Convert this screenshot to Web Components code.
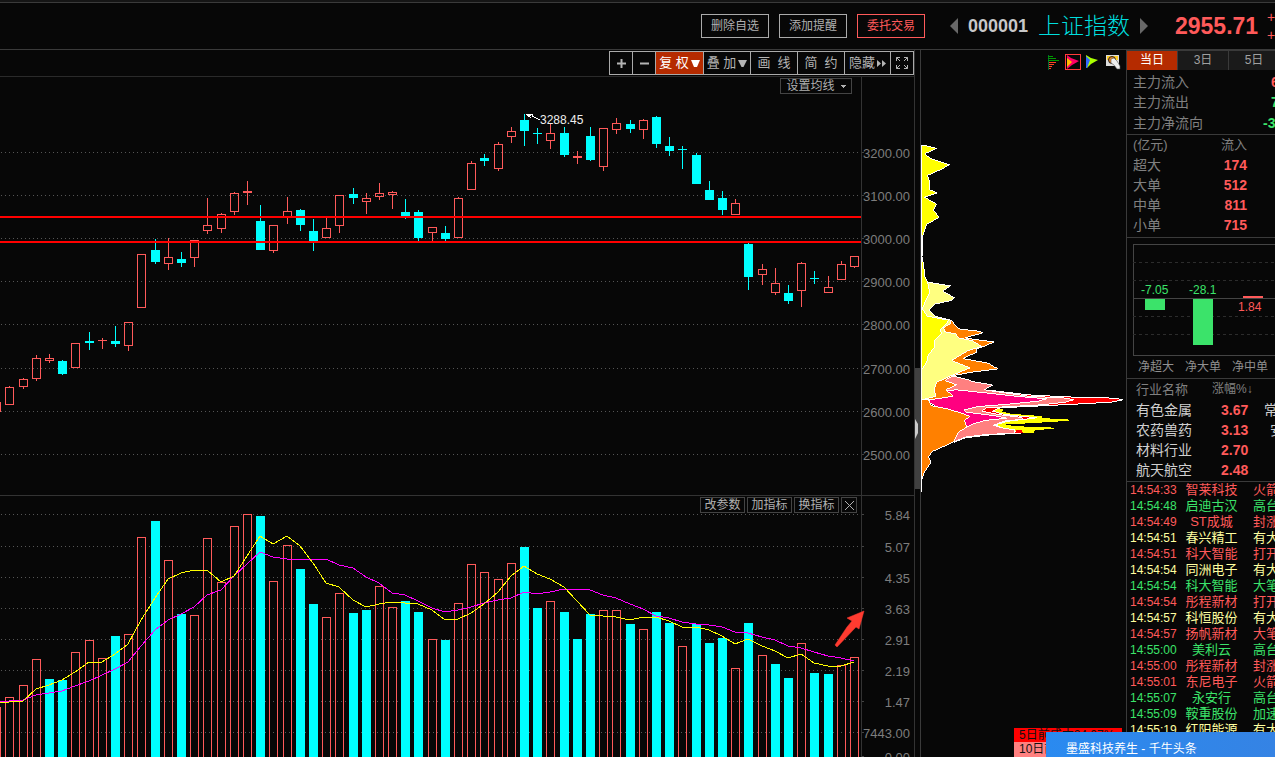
<!DOCTYPE html>
<html lang="zh-CN">
<head>
<meta charset="utf-8">
<title>上证指数 000001</title>
<style>
html, body { margin: 0; height: 100%; background: #070707; overflow: hidden; }
body { font: 12px/16px "Liberation Sans", "Noto Sans CJK SC", sans-serif; color: #b4b4b4; }
</style>
</head>
<body>
<stock-app></stock-app>
<script>
function define(name, html, ready) {
  customElements.define(name, class extends HTMLElement {
    constructor() {
      super();
      this.attachShadow({ mode: 'open' }).innerHTML =
        '<style>*{box-sizing:border-box}button{font:inherit;color:inherit;background:none;margin:0;padding:0;cursor:pointer;white-space:nowrap}svg{display:block}table{border-collapse:collapse;table-layout:fixed}th,td{padding:0;font-weight:inherit;text-align:left;white-space:nowrap}</style>' + html;
      if (ready) ready(this.shadowRoot, this);
    }
  });
}

/* Daily bars: x, body top, body bottom, wick top, wick bottom, falling day, volume top, volume falling */
const BARS = [
[-8,402,412,402,412,0,707,0],[5,387,405,386,405,0,697,0],[19,379,387,378,389,0,685,0],[32,358,379,355,381,0,659,0],
[45,358,361,354,363,0,679,1],[58,361,374,360,375,1,680,1],[71,343,368,343,368,0,652,0],[85,341,343,332,350,1,640,0],
[98,340,341,338,349,0,658,0],[111,341,344,326,347,1,636,1],[124,322,346,322,351,0,634,0],[137,254,308,254,308,0,537,0],
[151,250,262,239,264,1,521,1],[164,257,264,238,270,0,560,0],[177,259,263,252,267,1,614,1],[190,240,258,240,267,0,615,0],
[203,225,231,198,234,0,538,0],[217,214,229,213,233,0,582,0],[230,193,212,192,215,0,526,0],[243,191,193,181,205,0,514,0],
[256,221,250,205,250,1,516,1],[269,225,251,225,253,0,581,0],[283,211,217,197,224,0,545,0],[296,210,225,209,231,1,569,1],
[309,231,241,219,251,1,604,1],[322,228,238,218,238,0,617,0],[335,195,226,195,233,0,593,0],[349,194,198,188,204,1,613,1],
[362,198,202,193,214,0,610,1],[375,193,197,183,200,0,586,0],[388,192,195,191,209,0,607,0],[401,212,216,199,219,1,601,1],
[414,212,238,210,241,1,612,1],[428,227,233,227,241,0,639,0],[441,233,239,226,241,1,640,1],[454,198,238,197,238,0,603,0],
[467,163,190,161,190,0,564,0],[480,158,161,154,166,1,572,0],[494,144,169,142,171,0,579,0],[507,131,137,127,143,0,563,0],
[520,120,131,114,146,1,547,1],[533,133,134,128,144,1,608,1],[546,133,141,124,149,0,601,0],[560,133,155,127,157,1,612,1],
[573,156,158,151,164,0,639,1],[586,136,160,127,161,1,614,1],[599,128,167,128,171,0,610,0],[612,123,130,118,134,0,610,0],
[626,124,129,120,133,1,624,1],[639,120,130,119,139,0,629,0],[652,117,144,116,148,1,612,1],[665,146,151,137,156,1,623,1],
[678,149,150,146,169,1,646,0],[692,155,184,153,184,1,624,1],[705,190,200,181,200,1,643,1],[718,198,210,191,215,1,638,1],
[731,203,215,199,215,0,668,0],[744,244,277,243,290,1,623,1],[758,269,275,264,285,0,655,0],[771,283,293,268,295,0,664,1],
[784,293,301,285,304,1,678,1],[797,263,291,262,307,0,643,0],[810,278,279,271,284,1,673,1],[824,287,293,276,293,0,674,1],
[837,264,280,261,280,0,665,0],[850,256,267,256,268,0,657,0]];
const MA5 = [703,702,701,689,685,680,672,662,662,654,644,620,598,579,573,570,570,582,576,556,536,544,536,546,563,583,587,600,607,604,602,603,604,610,620,619,613,604,592,576,566,574,579,587,601,615,616,617,620,617,617,621,627,627,630,636,644,639,646,651,658,654,663,666,666,662];
const MA10 = [701,701,700,695,693,691,686,681,675,669,662,646,630,620,614,607,595,590,576,564,552,557,559,560,559,559,565,568,577,583,593,595,601,608,612,610,607,603,600,598,592,594,592,589,589,590,595,598,604,609,616,618,622,624,625,627,632,633,637,640,646,648,652,656,658,661];
const UP = '#ff5a5a', DOWN = '#00ffff';

function box(x, top, bottom, falling) {
  const h = bottom - top;
  return falling || h < 3
    ? `<rect x="${x}" y="${top}" width="9" height="${h}" fill="${falling ? DOWN : UP}"/>`
    : `<path d="M${x} ${top}h9v${h}h-9zM${x + 1} ${top + 1}v${h - 2}h7v${-(h - 2)}z" fill="${UP}" fill-rule="evenodd"/>`;
}
function grid(rows) {
  return rows.map(y => `<path d="M1 ${y}.5H861" stroke="#555" stroke-dasharray="1 3"/>`).join('');
}
function axis(rows, top, height) {
  return `<svg class="axis" viewBox="0 ${top} 52 ${height}" preserveAspectRatio="xMinYMin meet">` +
    rows.map(([y, t]) => `<path d="M0 ${y}.5h2" stroke="#444"/><text x="48" y="${y + 6}" text-anchor="end">${t}</text>`).join('') + '</svg>';
}
const CHART_CSS = `<style>
:host{display:grid;grid-template-columns:minmax(0,1fr) 53px;position:relative;min-height:0;overflow:hidden}
svg{width:100%;height:100%;shape-rendering:crispEdges}
.axis{border-left:1px solid #333}
.axis text{font:13px "Liberation Sans",sans-serif;fill:#7d7d7d}
.mark{font:12px "Liberation Sans",sans-serif;fill:#eee}
.tools{position:absolute;display:flex;color:#b0b0b0}
.tools button{border:1px solid #444;background:#070707;height:16px;line-height:14px;font-size:12px}
</style>`;

const PRICE_ROWS = [[152,'3200.00'],[195,'3100.00'],[238,'3000.00'],[281,'2900.00'],[324,'2800.00'],[368,'2700.00'],[411,'2600.00'],[454,'2500.00']];
define('price-chart', CHART_CSS + `<style>.tools{top:1px;right:62px}.tools button{width:72px;display:flex;align-items:center;justify-content:center;gap:6px}</style>
<svg viewBox="0 77 861 418" preserveAspectRatio="xMaxYMin meet" role="img" aria-label="日K线">
${grid(PRICE_ROWS.map(r => r[0]))}
${BARS.map(([x, t, b, wt, wb, f]) => {
  const c = f ? DOWN : UP;
  return (wt < t ? `<rect x="${x + 4}" y="${wt}" width="1" height="${t - wt}" fill="${c}"/>` : '') +
    (wb > b ? `<rect x="${x + 4}" y="${b}" width="1" height="${wb - b}" fill="${c}"/>` : '') + box(x, t, b, f);
}).join('')}
<path d="M0 217H861M0 242H861" stroke="#f00" stroke-width="2"/>
<path d="M526 114l7 0-1 2 8 4M526 114l5 4" fill="none" stroke="#fff"/><path d="M526 114h7l-4 3z" fill="#fff"/>
<text class="mark" x="540" y="124">3288.45</text>
</svg>${axis(PRICE_ROWS, 77, 418)}
<div class="tools"><button>设置均线<svg style="width:5px;height:3px" viewBox="0 0 5 3"><path d="M0 0h5L2.500 3z" fill="#b0b0b0"/></svg></button></div>`);

const VOL_ROWS = [[514,'5.84'],[546,'5.07'],[577,'4.35'],[608,'3.63'],[639,'2.91'],[670,'2.19'],[701,'1.47'],[732,'7443.00']];
const line = (ys, c) => `<polyline fill="none" stroke="${c}" points="${ys.map((y, i) => (BARS[i][0] + 4) + ',' + y).join(' ')}"/>`;
define('volume-chart', CHART_CSS + `<style>.tools{top:1px;right:57px;gap:2px}.tools button{width:45px}.tools button.x{width:16px;display:grid;place-items:center}</style>
<svg style="overflow:visible;position:relative" viewBox="0 496 861 261" preserveAspectRatio="xMaxYMin meet" role="img" aria-label="成交量">
${grid(VOL_ROWS.map(r => r[0]))}
${BARS.map(b => box(b[0], b[6], 762, b[7])).join('')}
${line(MA10, '#ff00ff')}${line(MA5, '#ffff00')}
<path d="M864 611L847 618 852 621 847 627 835 645 837 647 856 627 859 629z" fill="#ff3b30" stroke="#ff3b30" stroke-width=".5" shape-rendering="auto"/>
</svg>${axis([...VOL_ROWS, [756, '0.00']], 496, 261)}
<div class="tools"><button>改参数</button><button>加指标</button><button>换指标</button><button class="x" aria-label="关闭"><svg style="width:11px;height:11px" viewBox="0 0 11 11"><path d="M1 1l9 9M10 1l-9 9" stroke="#b0b0b0"/></svg></button></div>`);

define('chart-toolbar', `<style>
:host{display:flex;justify-content:flex-end;padding-top:1px;height:27px;border-bottom:1px solid #2a2a2a}
div{display:grid;grid-template-columns:23px 23px 48px 47px 47px 47px 46px 23px;height:24px;border:1px solid #aaa;border-left:0}
button{border:0;border-left:1px solid #aaa;display:flex;align-items:center;justify-content:center;font-size:13px;color:#b4b4b4;gap:2px}
.on{background:#b52b00;color:#fff}
svg{width:9px;height:9px;fill:currentColor}
</style><div>
<button aria-label="放大"><svg viewBox="0 0 9 9"><path d="M0 3.500h9v2H0zM3.500 0h2v9h-2z"/></svg></button>
<button aria-label="缩小"><svg viewBox="0 0 9 9"><path d="M0 3.500h9v2H0z"/></svg></button>
<button class="on">复 权<svg viewBox="0 0 9 9"><path d="M0 1h9L6 8H3z"/></svg></button>
<button>叠 加<svg viewBox="0 0 9 9"><path d="M0 1h9L5.500 8h-2z"/></svg></button>
<button>画&nbsp; 线</button><button>简&nbsp; 约</button>
<button>隐藏<svg viewBox="0 0 9 9"><path d="M0 1l4 3.500L0 8zM5 1l4 3.500L5 8z"/></svg></button>
<button aria-label="全屏"><svg style="width:12px;height:12px" viewBox="0 0 12 12" stroke="currentColor"><path d="M.5 4V.5H4M.5.5L4 4M8 .5h3.500V4M11.500.5L8 4M.5 8v3.500H4M.5 11.500L4 8M8 11.500h3.500V8M11.500 11.500L8 8" fill="none"/></svg></button>
</div>`);

define('quote-header', `<style>
:host{display:flex;justify-content:flex-end;align-items:center;height:50px;border-bottom:1px solid #3a3a3a;padding:3px 0 0;background:linear-gradient(#151515 2px,#3a3a3a 2px,#3a3a3a 3px,#070707 3px)}
nav{display:flex;gap:10px;margin-right:25px}
nav button{width:68px;height:24px;border:1px solid #aaa;color:#b0b0b0;line-height:22px}
nav .hot{border-color:#ff5a5a;color:#ff5a5a}
.step{border:0;display:block}.step svg{width:8px;height:16px;fill:#686868}
.code{font:bold 18px/22px "Liberation Sans",sans-serif;color:#c8c8c8;width:61px;margin-left:10px;margin-right:9px}
.name{font-size:23px;line-height:30px;font-weight:300;color:#00dede;width:92px;margin:0 10px 0 0}
.price{font:bold 23px/26px "Liberation Sans",sans-serif;color:#ff5a5a;width:84px;margin-left:27px}
.delta{width:8px;margin-left:8px;overflow:hidden;color:#ff5a5a;font-size:14px;line-height:18px}
</style><nav><button>删除自选</button><button>添加提醒</button><button class="hot">委托交易</button></nav>
<button class="step" aria-label="上一只"><svg viewBox="0 0 8 16"><path d="M8 0v16L0 8z"/></svg></button>
<span class="code">000001</span><h1 class="name">上证指数</h1>
<button class="step" aria-label="下一只"><svg viewBox="0 0 8 16"><path d="M0 0v16l8-8z"/></svg></button>
<span class="price">2955.71</span><div class="delta">+<br>+</div>`);

define('chip-panel', `<style>
:host{display:block;position:relative;border-left:1px solid #3a3a3a;overflow:visible;min-height:0}
.chips{width:205px;height:707px;shape-rendering:crispEdges}
.modes{position:absolute;top:4px;right:5px;display:flex;gap:4px}
.modes button{border:0;width:16px;height:16px}
.modes .on{outline:1px solid #ff3b3b;outline-offset:-1px}
.grip{position:absolute;left:-6px;top:318px;width:5px;height:121px;background:#404040;border:0}
.grip svg{position:absolute;left:0;top:51px;width:4px;height:20px}
ul{position:absolute;right:4px;top:678px;width:108px;margin:0;padding:0;list-style:none;color:#111;line-height:14px}
li{height:14px;padding-left:5px;white-space:nowrap;overflow:hidden}
li+li{height:15px}
</style>
<svg class="chips" viewBox="0 0 205 707" role="img" aria-label="筹码分布"><g transform="translate(-6 80.500) scale(.33333)" stroke="#fff" stroke-width="3">
<path stroke="none" fill="#ff0" d="M150 832L230 838 265 836 262 843 290 850 383 857 380 862 430 866 486 868 430 873 350 878 272 882 300 887 435 892 400 896 360 899 355 908 330 907 150 900z"/>
<path fill="#f00" d="M100 778L230 780 340 793 450 799 600 803 623 808 590 815 480 821 380 826 255 832 232 842 270 852 365 862 280 872 240 883 270 895 325 907 215 914 150 922 118 935 60 880z"/>
<path fill="#ff8080" d="M60 750L90 745 115 737 160 748 170 753 235 764 220 770 208 778 340 797 455 803 476 808 450 815 380 823 215 832 200 842 250 852 320 861 325 867 275 870 235 884 260 892 300 898 300 908 215 912 150 920 120 933 60 880z"/>
<path fill="#ff0080" d="M40 815L45 808 100 780 125 778 220 788 300 797 395 805 370 812 270 822 190 828 147 838 155 845 235 855 275 863 210 870 175 880 155 890 100 870 60 825z"/>
<path fill="#ff8000" d="M20 808L40 808 48 825 100 836 140 848 165 858 148 870 155 890 130 905 115 935 52 963 40 980 48 995 35 1015 25 1030 22 1047H20z"/>
<path fill="#ff8000" d="M20 575L110 569 118 582 130 595 190 602 203 607 150 622 200 630 238 634 210 646 185 655 185 665 143 684 220 698 235 708 250 715 170 725 115 735 90 750 125 763 92 778 115 797 45 808 20 808z"/>
<path fill="#ffff80" d="M20 450L38 455 107 466 83 482 119 502 110 510 62 520 42 538 60 557 108 569 105 580 85 592 90 604 123 610 130 622 170 630 200 648 160 660 110 690 165 712 110 735 65 755 58 775 62 798 20 808z"/>
<path fill="#ff0" d="M20 45L30 45 65 54 33 68 33 75 50 85 104 103 75 118 37 135 43 150 44 178 67 187 28 200 64 220 55 240 73 260 35 282 22 320 21 380 25 400 30 440 38 455 44 485 30 515 22 535 37 557 100 569 95 580 75 598 80 610 60 628 60 650 40 672 35 695 22 715H20z"/>
<path d="M20 45V1085"/><path stroke="none" fill="#f00" d="M303 898l15 0 8 10-20 0z"/>
</g></svg>
<button class="grip" aria-label="展开面板"><svg viewBox="0 0 4 20"><path d="M0 0l3 5v9l-3 6z" fill="#ccc"/></svg></button>
<div class="modes">
<button aria-label="筹码峰"><svg viewBox="0 0 16 16" shape-rendering="crispEdges"><path d="M3 1v15" stroke="#063" fill="none"/><path d="M3 2.500h5M3 4.500h8M3 6.500h11" stroke="#090"/><path d="M4 8.500h7M4 10.500h5M4 12.500h3M4 14.500h2" stroke="#f42"/></svg></button>
<button class="on" aria-label="火焰山"><svg viewBox="0 0 16 16"><path d="M2 1l4 3 8 3-7 4-5 4z" fill="#f06"/><path d="M2 4l5 4-5 5z" fill="#fb0"/></svg></button>
<button aria-label="活跃度"><svg viewBox="0 0 16 16"><path d="M1 1l5 3 7 2-7 4-4 4H1z" fill="#af0"/><path d="M1 2l4 4-3 8H1z" fill="#36f"/></svg></button>
<button aria-label="设置"><svg viewBox="0 0 16 16"><path d="M1 1h13v11H1z" fill="#ddd"/><path d="M2 2h11v4H2z" fill="#fc2"/><circle cx="7" cy="6" r="3.500" fill="#e82" stroke="#222"/><path d="M6 5l3-1 3 3 3 5v3h-3L9 11l-3-2z" fill="#eee" stroke="#555" stroke-width=".6"/></svg></button>
</div>
<ul><li style="background:#f00">5日前成本24.07%</li><li style="background:#ff8080">10日前成本</li></ul>`);

define('flow-panel', `<style>
:host{display:block;color:#808080;font-size:14px}
nav{display:grid;grid-template-columns:50px 50px 50px;gap:1px;height:20px;background:#3a3a3a;padding-top:1px}
nav button{border:0;background:#1a1a1a;color:#a0a0a0;font-size:12px;line-height:17px}
nav .on{background:#b52b00;color:#fff}
table{width:240px;margin-left:6px}
th,td{height:20px;line-height:20px}
.main{margin-top:2px}.main tr:last-child>*{height:22px}
.main td{text-align:left;font-weight:bold;color:#ff5a5a}
.main td.near{padding-left:8px}
.main .g{color:#3be36a}
section{border-bottom:1px solid #3a3a3a;overflow:hidden}
.size{margin-bottom:2px}
.size thead{font-size:13px}.size thead th+th{text-align:right}
.size td{color:#ff5a5a;font-weight:bold;text-align:right}
svg{width:142px;height:112px;margin:6px 0 0 6px;shape-rendering:crispEdges}
svg text{font:12px "Liberation Sans",sans-serif}
.legend{display:flex;gap:11px;margin-left:11px;height:22px;line-height:22px;font-size:12px;color:#909090;white-space:nowrap}
.legend span{flex:none}
</style>
<nav><button class="on">当日</button><button>3日</button><button>5日</button></nav>
<section><table class="main"><colgroup><col style="width:130px"><col></colgroup>
<tr><th scope="row">主力流入</th><td class="near">6</td></tr><tr><th scope="row">主力流出</th><td class="near g">7</td></tr><tr><th scope="row">主力净流向</th><td class="g">-3</td></tr></table></section>
<section><table class="size"><colgroup><col style="width:60px"><col style="width:54px"><col></colgroup>
<thead><tr><th>(亿元)</th><th>流入</th></tr></thead>
<tbody><tr><th scope="row">超大</th><td>174</td></tr><tr><th scope="row">大单</th><td>512</td></tr><tr><th scope="row">中单</th><td>811</td></tr><tr><th scope="row">小单</th><td>715</td></tr></tbody></table></section>
<section><svg viewBox="0 0 142 112" role="img" aria-label="净流入">
<path d="M150 .5H.5v111H150M0 54.500h150" fill="none" stroke="#444"/>
<path d="M0 18.500h142M0 36.500h142M0 72.500h142M0 90.500h142" stroke="#2c2c2c" stroke-dasharray="3 3"/>
<path d="M12 55h20v11H12zM60 55h20v46H60z" fill="#3be36a"/><path d="M110 52h20v2h-20z" fill="#ff5a5a"/>
<g fill="#3be36a"><text x="8" y="50">-7.05</text><text x="56" y="50">-28.1</text></g><text x="105" y="67" fill="#ff5a5a">1.84</text>
</svg><div class="legend"><span>净超大</span><span>净大单</span><span>净中单</span></div></section>`);

define('industry-list', `<style>
:host{display:block;overflow:hidden;border-bottom:1px solid #3a3a3a;padding-bottom:1px;color:#d0d0d0;font-size:14px}
table{width:240px;margin-left:9px}
td{height:20px;line-height:20px}
th{height:21px;line-height:21px;font-size:13px;color:#808080}
th:nth-child(2){font-size:12px}
td:nth-child(2){color:#ff5a5a;font-weight:bold;padding-left:9px}
</style><table><colgroup><col style="width:76px"><col style="width:52px"><col></colgroup>
<thead><tr><th>行业名称</th><th>涨幅%↓</th></tr></thead>
<tbody><tr><td>有色金属</td><td>3.67</td><td>常</td></tr><tr><td>农药兽药</td><td>3.13</td><td style="padding-left:6px">安</td></tr><tr><td>材料行业</td><td>2.70</td></tr><tr><td>航天航空</td><td>2.48</td></tr></tbody></table>`);

const NEWS = `14:54:33 智莱科技 火箭 r
14:54:48 启迪古汉 高台 g
14:54:49 ST成城 封涨 r
14:54:51 春兴精工 有大 y
14:54:51 科大智能 打开 r
14:54:54 同洲电子 有大 y
14:54:54 科大智能 大笔 g
14:54:54 彤程新材 打开 r
14:54:57 科恒股份 有大 y
14:54:57 扬帆新材 大笔 r
14:55:00 美利云 高台 g
14:55:00 彤程新材 封涨 r
14:55:01 东尼电子 火箭 r
14:55:07 永安行 高台 g
14:55:09 鞍重股份 加速 g
14:55:19 红阳能源 有大 y`.split('\n').map(l => l.split(' '));
define('news-feed', `<style>
:host{display:block;overflow:hidden;font-size:13px}
table{width:200px;margin-left:3px}
td{height:16px;line-height:16px}
td:first-child{font-size:12px}
td:nth-child(2){text-align:center}td:nth-child(3){padding-left:13px}
.r{color:#ff5a5a}.g{color:#3be36a}.y{color:#ffffa0}
</style><table><colgroup><col style="width:53px"><col style="width:57px"><col></colgroup><tbody>${
NEWS.map(([t, n, e, c]) => `<tr class="${c}"><td>${t}</td><td>${n}</td><td>${e}</td></tr>`).join('')}</tbody></table>`);

define('toast-popup', `<style>
:host{display:block;position:absolute;right:0;bottom:0;width:229px;height:25px;box-sizing:border-box;overflow:hidden;background:linear-gradient(90deg,#2a8af0,#3583e4);color:#fff;padding:9px 0 0 20px;line-height:16px;white-space:nowrap;z-index:2}
</style><slot></slot>`);

define('stock-app', `<style>
:host{display:grid;grid-template-rows:50px minmax(0,1fr);height:100vh;overflow:hidden;position:relative}
main{display:grid;grid-template-columns:minmax(0,1fr) 206px 149px;min-height:0}
.charts{display:grid;grid-template-rows:27px 418fr 262fr;min-height:0;margin-right:5px;border-right:1px solid #333}
volume-chart{border-top:1px solid #333}
aside{border-left:1px solid #3a3a3a;overflow:hidden;min-height:0}
</style>
<quote-header></quote-header>
<main><div class="charts"><chart-toolbar></chart-toolbar><price-chart></price-chart><volume-chart></volume-chart></div>
<chip-panel></chip-panel>
<aside><flow-panel></flow-panel><industry-list></industry-list><news-feed></news-feed></aside></main>
<toast-popup>墨盛科技养生 - 千牛头条</toast-popup>`);
</script>
</body>
</html>
